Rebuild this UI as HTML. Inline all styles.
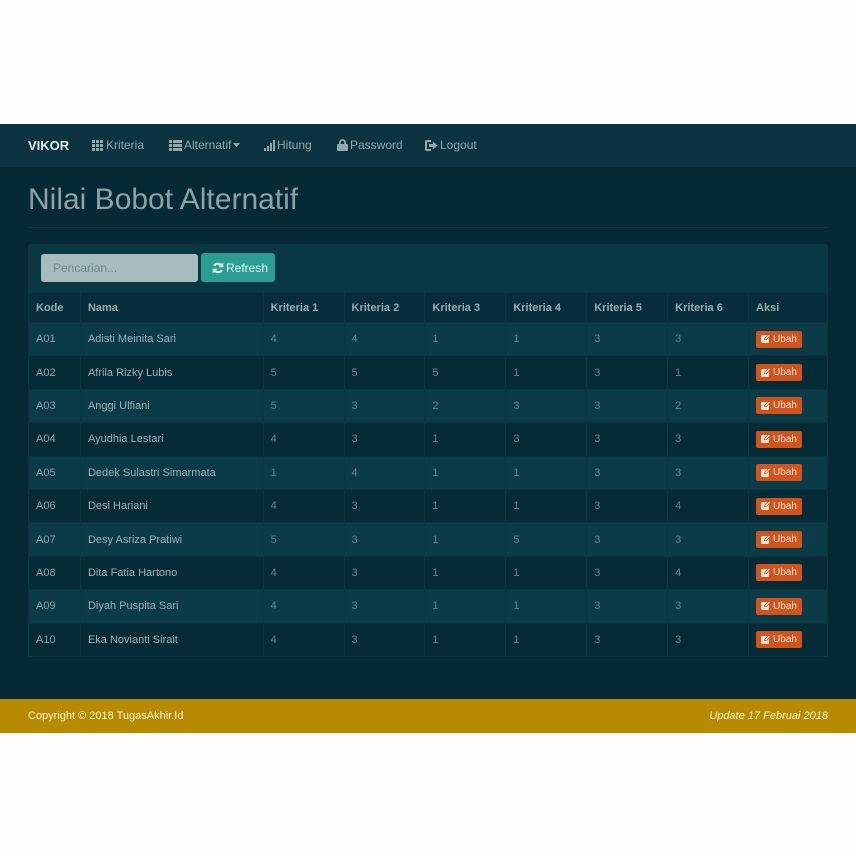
<!DOCTYPE html>
<html><head><meta charset="utf-8"><style>
*{box-sizing:border-box;margin:0;padding:0}
body{width:856px;height:856px;background:#fdfdfd;font-family:"Liberation Sans",sans-serif;position:relative;overflow:hidden}
.main{position:absolute;left:0;top:124px;width:856px;height:575px;background:#052a36}
.nav{position:absolute;left:0;top:124px;width:856px;height:43px;background:#0b3440}
.nav span{position:absolute;top:14px;font-size:12px;color:#8fa9ae;display:flex;align-items:center;gap:2px}
.nav svg{fill:#8fa9ae}
.brand{left:28px;color:#e8eef0!important;font-weight:bold;font-size:13px!important}
h1{position:absolute;left:28px;top:183px;font-size:30px;font-weight:normal;color:#8aa3a8}
.hr{position:absolute;left:28px;top:227px;width:800px;height:1px;background:#0c3742}
.panel{position:absolute;left:28px;top:244px;width:800px;height:413px;background:#093843;border-radius:3px}
.inp{position:absolute;left:41px;top:254px;width:157px;height:28px;background:#a7bcbd;border-radius:3px;font-size:12px;color:#6f8a8e;padding:7px 12px}
.ref{position:absolute;left:201px;top:253px;width:74px;height:29px;background:#2a9e91;border-radius:3px;font-size:12px;color:#e8f6f4;padding:0 0 0 11px;display:flex;align-items:center;gap:2px}
table{position:absolute;left:28px;top:292px;width:800px;border-collapse:collapse;font-size:11px}
td,th{border:1px solid #0b3541;text-align:left;padding:0 7px;height:33.4px;color:#62868e;font-weight:normal}
th{height:30px;background:#062d39;color:#94adb2;font-weight:bold}
tr:nth-child(even) td{background:#0b3b47}
tr:nth-child(odd) td{background:#052b37}
td.n{color:#9ab1b6}
td.k{color:#8aa3a8}
.b{display:inline-flex;align-items:center;gap:2px;background:#d1541c;color:#f5e4da;border-radius:2px;font-size:10px;padding:3px 5px;line-height:11px}
.foot{position:absolute;left:0;top:699px;width:856px;height:34px;background:#b88a00;font-size:11px;color:#fff4d8}
.foot span{position:absolute;top:11px}
</style></head><body>
<div class="main"></div>
<div class="nav">
<span class="brand">VIKOR</span>
<span style="left:92px"><svg width="12" height="11" viewBox="0 0 12 11"><rect x="0" y="0" width="3" height="3"/><rect x="4" y="0" width="3" height="3"/><rect x="8" y="0" width="3" height="3"/><rect x="0" y="4" width="3" height="3"/><rect x="4" y="4" width="3" height="3"/><rect x="8" y="4" width="3" height="3"/><rect x="0" y="8" width="3" height="3"/><rect x="4" y="8" width="3" height="3"/><rect x="8" y="8" width="3" height="3"/></svg>Kriteria</span>
<span style="left:169px"><svg width="13" height="11" viewBox="0 0 13 11"><rect x="0" y="0" width="3" height="3"/><rect x="4" y="0" width="9" height="3"/><rect x="0" y="4" width="3" height="3"/><rect x="4" y="4" width="9" height="3"/><rect x="0" y="8" width="3" height="3"/><rect x="4" y="8" width="9" height="3"/></svg>Alternatif<svg width="7" height="4" viewBox="0 0 7 4"><path d="M0 0h7L3.5 4z"/></svg></span>
<span style="left:264px"><svg width="11" height="11" viewBox="0 0 11 11"><rect x="0" y="8" width="2" height="3"/><rect x="3" y="6" width="2" height="5"/><rect x="6" y="3" width="2" height="8"/><rect x="9" y="0" width="2" height="11"/></svg>Hitung</span>
<span style="left:337px"><svg width="11" height="12" viewBox="0 0 11 12"><path d="M2 5V3.5a3.5 3.5 0 0 1 7 0V5h-1.8V3.6a1.7 1.7 0 0 0-3.4 0V5z"/><rect x="0" y="5" width="11" height="7" rx="1"/></svg> Password</span>
<span style="left:425px"><svg width="13" height="11" viewBox="0 0 13 11"><path d="M0 1.5A1.5 1.5 0 0 1 1.5 0H6v2H2v7h4v2H1.5A1.5 1.5 0 0 1 0 9.5z"/><path d="M4 4h4V1.5L12.5 5.5 8 9.5V7H4z"/></svg>Logout</span>
</div>
<h1>Nilai Bobot Alternatif</h1>
<div class="hr"></div>
<div class="panel"></div>
<div class="inp">Pencarian...</div>
<div class="ref"><svg width="12" height="12" viewBox="0 0 12 12" fill="none" stroke="#e8f6f4" stroke-width="2"><path d="M10 4.5A4.5 4.5 0 0 0 2 4"/><path d="M2 7.5A4.5 4.5 0 0 0 10 8"/><path d="M10.5 1v3.5H7" stroke-width="1.6"/><path d="M1.5 11V7.5H5" stroke-width="1.6"/></svg>Refresh</div>
<table>
<colgroup><col style="width:52px"><col style="width:183px"><col style="width:81px"><col style="width:81px"><col style="width:81px"><col style="width:81px"><col style="width:81px"><col style="width:81px"><col style="width:79px"></colgroup>
<tr><th>Kode</th><th>Nama</th><th>Kriteria 1</th><th>Kriteria 2</th><th>Kriteria 3</th><th>Kriteria 4</th><th>Kriteria 5</th><th>Kriteria 6</th><th>Aksi</th></tr>
<tr><td class="k">A01</td><td class="n">Adisti Meinita Sari</td><td>4</td><td>4</td><td>1</td><td>1</td><td>3</td><td>3</td><td><span class="b"><svg width="10" height="10" viewBox="0 0 10 10"><rect x="0" y="1" width="8" height="8" rx="1.5" fill="#f5e4da"/><path d="M3 6l.5-2L8 -0.5 10 1.5 5.5 6z" fill="#d1541c"/><path d="M4 5.5l.3-1.2L8 .6l.9.9L5.2 5.2z" fill="#f5e4da"/></svg>Ubah</span></td></tr>
<tr><td class="k">A02</td><td class="n">Afrila Rizky Lubis</td><td>5</td><td>5</td><td>5</td><td>1</td><td>3</td><td>1</td><td><span class="b"><svg width="10" height="10" viewBox="0 0 10 10"><rect x="0" y="1" width="8" height="8" rx="1.5" fill="#f5e4da"/><path d="M3 6l.5-2L8 -0.5 10 1.5 5.5 6z" fill="#d1541c"/><path d="M4 5.5l.3-1.2L8 .6l.9.9L5.2 5.2z" fill="#f5e4da"/></svg>Ubah</span></td></tr>
<tr><td class="k">A03</td><td class="n">Anggi Ulfiani</td><td>5</td><td>3</td><td>2</td><td>3</td><td>3</td><td>2</td><td><span class="b"><svg width="10" height="10" viewBox="0 0 10 10"><rect x="0" y="1" width="8" height="8" rx="1.5" fill="#f5e4da"/><path d="M3 6l.5-2L8 -0.5 10 1.5 5.5 6z" fill="#d1541c"/><path d="M4 5.5l.3-1.2L8 .6l.9.9L5.2 5.2z" fill="#f5e4da"/></svg>Ubah</span></td></tr>
<tr><td class="k">A04</td><td class="n">Ayudhia Lestari</td><td>4</td><td>3</td><td>1</td><td>3</td><td>3</td><td>3</td><td><span class="b"><svg width="10" height="10" viewBox="0 0 10 10"><rect x="0" y="1" width="8" height="8" rx="1.5" fill="#f5e4da"/><path d="M3 6l.5-2L8 -0.5 10 1.5 5.5 6z" fill="#d1541c"/><path d="M4 5.5l.3-1.2L8 .6l.9.9L5.2 5.2z" fill="#f5e4da"/></svg>Ubah</span></td></tr>
<tr><td class="k">A05</td><td class="n">Dedek Sulastri Simarmata</td><td>1</td><td>4</td><td>1</td><td>1</td><td>3</td><td>3</td><td><span class="b"><svg width="10" height="10" viewBox="0 0 10 10"><rect x="0" y="1" width="8" height="8" rx="1.5" fill="#f5e4da"/><path d="M3 6l.5-2L8 -0.5 10 1.5 5.5 6z" fill="#d1541c"/><path d="M4 5.5l.3-1.2L8 .6l.9.9L5.2 5.2z" fill="#f5e4da"/></svg>Ubah</span></td></tr>
<tr><td class="k">A06</td><td class="n">Desi Hariani</td><td>4</td><td>3</td><td>1</td><td>1</td><td>3</td><td>4</td><td><span class="b"><svg width="10" height="10" viewBox="0 0 10 10"><rect x="0" y="1" width="8" height="8" rx="1.5" fill="#f5e4da"/><path d="M3 6l.5-2L8 -0.5 10 1.5 5.5 6z" fill="#d1541c"/><path d="M4 5.5l.3-1.2L8 .6l.9.9L5.2 5.2z" fill="#f5e4da"/></svg>Ubah</span></td></tr>
<tr><td class="k">A07</td><td class="n">Desy Asriza Pratiwi</td><td>5</td><td>3</td><td>1</td><td>5</td><td>3</td><td>3</td><td><span class="b"><svg width="10" height="10" viewBox="0 0 10 10"><rect x="0" y="1" width="8" height="8" rx="1.5" fill="#f5e4da"/><path d="M3 6l.5-2L8 -0.5 10 1.5 5.5 6z" fill="#d1541c"/><path d="M4 5.5l.3-1.2L8 .6l.9.9L5.2 5.2z" fill="#f5e4da"/></svg>Ubah</span></td></tr>
<tr><td class="k">A08</td><td class="n">Dita Fatia Hartono</td><td>4</td><td>3</td><td>1</td><td>1</td><td>3</td><td>4</td><td><span class="b"><svg width="10" height="10" viewBox="0 0 10 10"><rect x="0" y="1" width="8" height="8" rx="1.5" fill="#f5e4da"/><path d="M3 6l.5-2L8 -0.5 10 1.5 5.5 6z" fill="#d1541c"/><path d="M4 5.5l.3-1.2L8 .6l.9.9L5.2 5.2z" fill="#f5e4da"/></svg>Ubah</span></td></tr>
<tr><td class="k">A09</td><td class="n">Diyah Puspita Sari</td><td>4</td><td>3</td><td>1</td><td>1</td><td>3</td><td>3</td><td><span class="b"><svg width="10" height="10" viewBox="0 0 10 10"><rect x="0" y="1" width="8" height="8" rx="1.5" fill="#f5e4da"/><path d="M3 6l.5-2L8 -0.5 10 1.5 5.5 6z" fill="#d1541c"/><path d="M4 5.5l.3-1.2L8 .6l.9.9L5.2 5.2z" fill="#f5e4da"/></svg>Ubah</span></td></tr>
<tr><td class="k">A10</td><td class="n">Eka Novianti Sirait</td><td>4</td><td>3</td><td>1</td><td>1</td><td>3</td><td>3</td><td><span class="b"><svg width="10" height="10" viewBox="0 0 10 10"><rect x="0" y="1" width="8" height="8" rx="1.5" fill="#f5e4da"/><path d="M3 6l.5-2L8 -0.5 10 1.5 5.5 6z" fill="#d1541c"/><path d="M4 5.5l.3-1.2L8 .6l.9.9L5.2 5.2z" fill="#f5e4da"/></svg>Ubah</span></td></tr>
</table>
<div class="foot"><span style="left:28px">Copyright © 2018 TugasAkhir.Id</span><span style="right:28px;font-style:italic">Update 17 Februai 2018</span></div>
</body></html>
